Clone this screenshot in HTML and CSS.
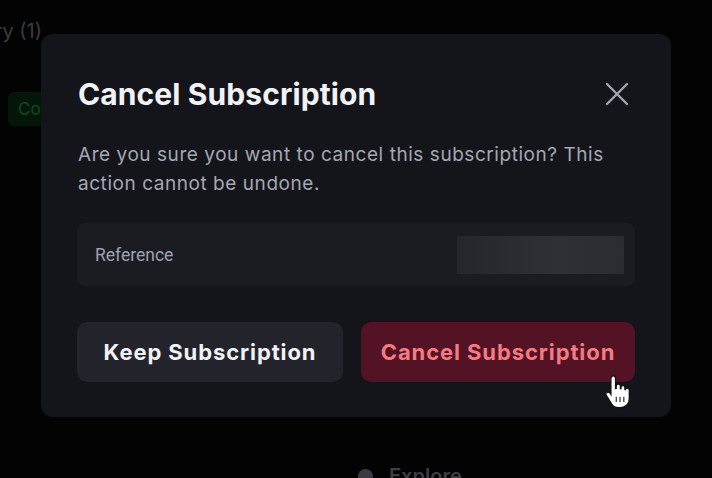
FILE: index.html
```html
<!DOCTYPE html>
<html lang="en">
<head>
<meta charset="utf-8">
<title>Cancel Subscription</title>
<link rel="stylesheet" href="styles.css">
</head>
<body>
<div class="page">
  <div class="page-title">History (1)</div>
  <div class="status-row"><span class="badge">Completed</span></div>
  <div class="explore"><span class="explore-icon"></span>Explore</div>
</div>

<div class="overlay">
  <div class="modal" role="dialog" aria-labelledby="modal-title">
    <div class="modal-head">
      <h2 id="modal-title" class="modal-title">Cancel Subscription</h2>
      <button class="close" aria-label="Close">
        <svg width="24" height="24" viewBox="0 0 24 24" fill="none" stroke="currentColor" stroke-width="2.4" stroke-linecap="round"><path d="M2 2 L22 22 M22 2 L2 22"/></svg>
      </button>
    </div>
    <p class="modal-text">Are you sure you want to cancel this subscription? This action cannot be undone.</p>
    <div class="ref-box">
      <span class="ref-label">Reference</span>
      <span class="ref-value"></span>
    </div>
    <div class="actions">
      <button class="btn btn-keep">Keep Subscription</button>
      <button class="btn btn-cancel">Cancel Subscription
        <svg class="cursor" width="30" height="37" viewBox="0 0 26 32"><path d="M8 2.5c1.2 0 2 .9 2 2v9l.6-.1V11.5c0-1 .8-1.8 1.8-1.8s1.8.8 1.8 1.8v2l.5.1v-1c0-1 .8-1.7 1.7-1.7s1.7.8 1.7 1.7v1.7l.4.1c.2-.8.9-1.300 1.7-1.300 1 0 1.7.8 1.7 1.7v7.4c0 4.3-3.1 7.8-7.6 7.8h-2c-2.6 0-4.3-1.1-5.6-3L2 19.4c-.6-.9-.3-2 .5-2.5.9-.6 2-.4 2.7.4L6 18.6V4.5c0-1.1.9-2 2-2z" fill="#fff" stroke="#111" stroke-width="1.1"/><path d="M10.6 20.5v4.5M13.9 20.5v4.5M17.2 20.5v4.5" stroke="#111" stroke-width="0.9" fill="none"/></svg>
      </button>
    </div>
  </div>
</div>
</body>
</html>
```

FILE: styles.css
```css
* { box-sizing: border-box; }
html, body { margin: 0; height: 100%; }
body {
  background: #030304;
  font-family: "Inter", "Liberation Sans", sans-serif;
  overflow: hidden;
}

/* dimmed page behind */
.page {
  height: 100%;
  padding: 18px 0 0 0;
  color: #3a3b41;
  position: relative;
}
.page-title {
  font-size: 20px;
  margin-left: -54px;
  line-height: 26px;
}
.status-row { margin-top: 48px; padding-left: 8px; }
.badge {
  display: inline-block;
  background: #04160a;
  color: #0d4a1c;
  font-size: 17px;
  padding: 7px 10px;
  border-radius: 6px;
}
.explore {
  position: absolute;
  left: 358px;
  top: 464px;
  display: flex;
  align-items: center;
  gap: 16px;
  font-size: 20px;
  font-weight: 600;
  color: #3d3e44;
}
.explore-icon {
  width: 15px; height: 15px; border-radius: 50%;
  background: #3a3b40;
}

/* overlay */
.overlay {
  position: fixed;
  inset: 0;
  display: flex;
  justify-content: center;
  align-items: flex-start;
  padding-top: 34px;
}
.modal {
  width: 630px;
  background: #14151a;
  border-radius: 12px;
  padding: 36px 36px 35px;
}
.modal-head {
  display: flex;
  justify-content: space-between;
  align-items: center;
}
.modal-title {
  margin: 6px 0 0 1px;
  font-size: 30px;
  line-height: 36px;
  font-weight: 700;
  color: #f1f2f6;
  letter-spacing: 0.1px;
}
.close {
  background: none;
  border: 0;
  padding: 0;
  margin: 6px 6px 0 0;
  width: 24px; height: 24px;
  color: #a2a4b0;
  display: flex;
}
.modal-text {
  margin: 28px 0 0 1px;
  font-size: 19px;
  line-height: 29px;
  color: #a4a7b5;
  letter-spacing: 0.55px;
}
.ref-box {
  margin-top: 25px;
  height: 63px;
  background: #1b1c21;
  border-radius: 8px;
  display: flex;
  align-items: center;
  justify-content: space-between;
  padding: 0 11px 0 18px;
}
.ref-label {
  font-family: "Roboto", "Liberation Sans", sans-serif;
  font-size: 17.5px;
  color: #9ea2b2;
}
.ref-value {
  width: 167px;
  height: 38px;
  background: linear-gradient(90deg, #25262c, #2c2d33 40%, #2f3036 60%, #2b2c32);
}
.actions {
  margin-top: 36px;
  display: grid;
  grid-template-columns: 266fr 274fr;
  gap: 18px;
}
.btn {
  height: 60px;
  border: 0;
  border-radius: 10px;
  font-family: "Inter", "Liberation Sans", sans-serif;
  font-size: 22px;
  font-weight: 700;
  letter-spacing: 0.9px;
  padding: 0;
}
.btn-keep { background: #22232b; color: #f1f2f6; }
.btn-cancel {
  background: #541324;
  color: #f57a82;
  position: relative;
}
.cursor {
  position: absolute;
  left: 243px;
  top: 51px;
}
```
